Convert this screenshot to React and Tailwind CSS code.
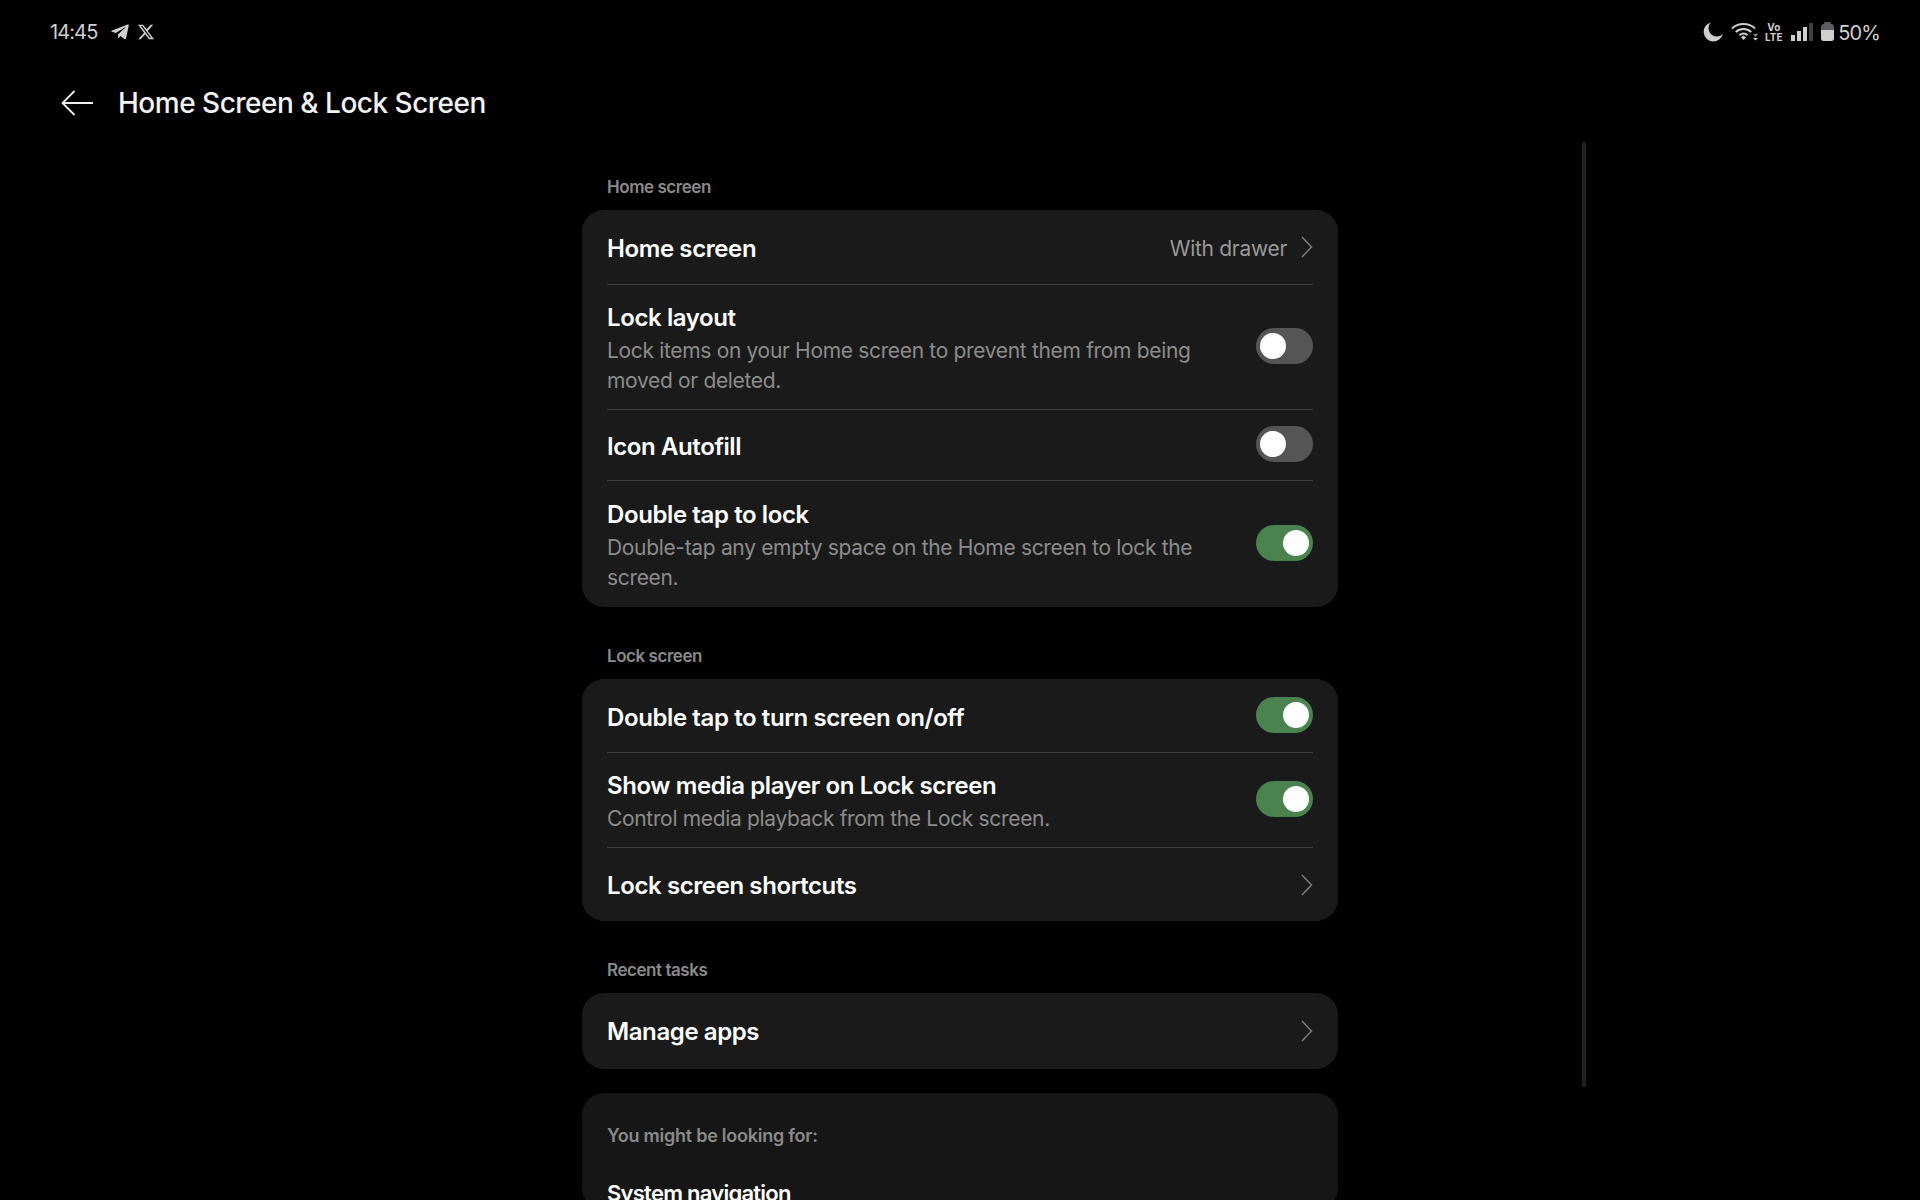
import React from 'react';
import { FaTelegramPlane } from 'react-icons/fa';
import { FaXTwitter } from 'react-icons/fa6';

const Chevron = () => (
  <svg width="14" height="22" viewBox="0 0 14 22" fill="none" className="shrink-0">
    <path d="M3 1 L12.5 11 L3 21" stroke="#7c7c7c" strokeWidth="1.5" />
  </svg>
);

const Toggle = ({ on }) => (
  <div className={`mb-[2px] flex h-[36px] w-[57px] shrink-0 items-center rounded-full px-[4px] ${on ? 'justify-end bg-[#4a8350]' : 'justify-start bg-[#555555]'}`}>
    <div className="h-[26px] w-[26px] rounded-full bg-white" />
  </div>
);

const Row = ({ title, desc, height, toggle, value, chevron, last }) => (
  <div className={`flex items-center justify-between ${height} ${last ? '' : 'border-b border-[#3d3d3d]'}`}>
    <div className={`w-[620px] ${desc ? 'pt-[1px]' : last ? 'pt-[2px]' : 'pt-[4px]'}`}>
      <div className={`text-[24px] font-semibold tracking-[-0.4px] text-white ${desc ? 'leading-[37px]' : 'leading-[36px]'}`}>{title}</div>
      {desc && <div className="text-[21px] leading-[30px] tracking-[-0.33px] text-[#8c8c8c]">{desc}</div>}
    </div>
    {toggle !== undefined && <Toggle on={toggle} />}
    {chevron && (
      <div className="flex items-center gap-[12px]">
        {value && <span className="pt-[4px] text-[21px] whitespace-nowrap tracking-[-0.3px] text-[#999999]">{value}</span>}
        <Chevron />
      </div>
    )}
  </div>
);

const SectionLabel = ({ children, className }) => (
  <div className={`pl-[25px] text-[17px] leading-[24px] font-semibold tracking-[-0.45px] text-[#8a8a8a] ${className}`}>{children}</div>
);

const Card = ({ children, className }) => (
  <div className={`rounded-[22px] bg-[#1a1a1a] px-[25px] ${className || ''}`}>{children}</div>
);

const Moon = () => (
  <svg width="20" height="20" viewBox="0 0 19 19">
    <path d="M7.4 0.4 A9.2 9.2 0 1 0 18.8 11.4 A7 7 0 0 1 7.4 0.4 Z" fill="#cfcfcf" />
  </svg>
);

const Wifi = () => (
  <svg width="27" height="19" viewBox="0 0 27 19" fill="none">
    <path d="M1 6.5 C7 0.5 18 0.5 24 6.5" stroke="#cfcfcf" strokeWidth="1.9" />
    <path d="M4.8 10 C9 6 16 6 20.2 10" stroke="#cfcfcf" strokeWidth="1.9" />
    <path d="M8.5 13.2 C11 11 14 11 16.5 13.2" stroke="#cfcfcf" strokeWidth="1.9" />
    <path d="M10 15.5 L12.5 13.6 L15 15.5 L12.5 18 Z" fill="#cfcfcf" />
    <path d="M22 12 L27 12 L24.5 15 Z" fill="#8a8a8a" />
    <path d="M22 16 L27 16 L24.5 18.5 Z" fill="#cfcfcf" />
  </svg>
);

const Signal = () => (
  <div className="flex h-[18px] items-end gap-[2px]">
    <div className="h-[6px] w-[4px] bg-[#cfcfcf]" />
    <div className="h-[10px] w-[4px] bg-[#cfcfcf]" />
    <div className="h-[14px] w-[4px] bg-[#cfcfcf]" />
    <div className="h-[18px] w-[4px] bg-[#3f3f3f]" />
  </div>
);

const Battery = () => (
  <div className="flex flex-col items-center">
    <div className="h-[2px] w-[7px] rounded-t-[1px] bg-[#5c5c5c]" />
    <div className="h-[17px] w-[13px] overflow-hidden rounded-[3px] bg-[#5c5c5c]">
      <div className="mt-[6px] h-[11px] bg-[#cfcfcf]" />
    </div>
  </div>
);

const StatusBar = () => (
  <div className="flex h-[63px] items-center justify-between pr-[40px] pl-[50px] text-[#cfcfcf]">
    <div className="flex items-center">
      <span className="w-[60px] text-[20px] tracking-[-0.9px]">14:45</span>
      <FaTelegramPlane className="h-[20px] w-[20px]" />
      <FaXTwitter className="ml-[7px] h-[18px] w-[18px]" />
    </div>
    <div className="flex items-center">
      <Moon />
      <div className="ml-[8px]"><Wifi /></div>
      <div className="ml-[7px] flex w-[17px] flex-col items-center text-[10px] leading-[10px] font-bold">
        <span>Vo</span>
        <span>LTE</span>
      </div>
      <div className="ml-[9px]"><Signal /></div>
      <div className="ml-[8px]"><Battery /></div>
      <span className="ml-[4px] pt-[2px] text-[20px] tracking-[-0.9px]">50%</span>
    </div>
  </div>
);

const Header = () => (
  <div className="flex h-[79px] items-center pl-[61px]">
    <svg width="33" height="26" viewBox="0 0 33 26" fill="none">
      <path d="M13.5 1 L1.5 13 L13.5 25 M1.5 13 L32 13" stroke="#f0f0f0" strokeWidth="1.8" />
    </svg>
    <h1 className="ml-[24px] text-[28px] font-medium tracking-[-0.5px] text-[#f2f2f2]">Home Screen &amp; Lock Screen</h1>
  </div>
);

export default function App() {
  return (
    <div className="h-[1200px] overflow-hidden bg-black font-['Inter',sans-serif]">
      <StatusBar />
      <Header />
      <div className="flex">
        <div className="ml-[582px] w-[756px]">
          <SectionLabel className="mt-[33px] mb-[11px]">Home screen</SectionLabel>
          <Card>
            <Row title="Home screen" height="h-[75px]" chevron value="With drawer" />
            <Row
              title="Lock layout"
              desc="Lock items on your Home screen to prevent them from being moved or deleted."
              height="h-[125px]"
              toggle={false}
            />
            <Row title="Icon Autofill" height="h-[71px]" toggle={false} />
            <Row
              title="Double tap to lock"
              desc="Double-tap any empty space on the Home screen to lock the screen."
              height="h-[126px]"
              toggle={true}
              last
            />
          </Card>

          <SectionLabel className="mt-[37px] mb-[11px]">Lock screen</SectionLabel>
          <Card>
            <Row title="Double tap to turn screen on/off" height="h-[74px]" toggle={true} />
            <Row
              title="Show media player on Lock screen"
              desc="Control media playback from the Lock screen."
              height="h-[95px]"
              toggle={true}
            />
            <Row title="Lock screen shortcuts" height="h-[73px]" chevron last />
          </Card>

          <SectionLabel className="mt-[37px] mb-[11px]">Recent tasks</SectionLabel>
          <Card>
            <Row title="Manage apps" height="h-[76px]" chevron last />
          </Card>

          <div className="mt-[24px] rounded-[22px] bg-[#161616] px-[25px] pt-[31px]">
            <div className="text-[18px] leading-[24px] font-semibold tracking-[-0.25px] text-[#8a8a8a]">You might be looking for:</div>
            <div className="mt-[28px] text-[22px] leading-[34px] font-semibold tracking-[-0.75px] text-white">System navigation</div>
          </div>
        </div>
        <div className="ml-[244px] h-[945px] w-[4px] bg-[#202020]" />
      </div>
    </div>
  );
}
